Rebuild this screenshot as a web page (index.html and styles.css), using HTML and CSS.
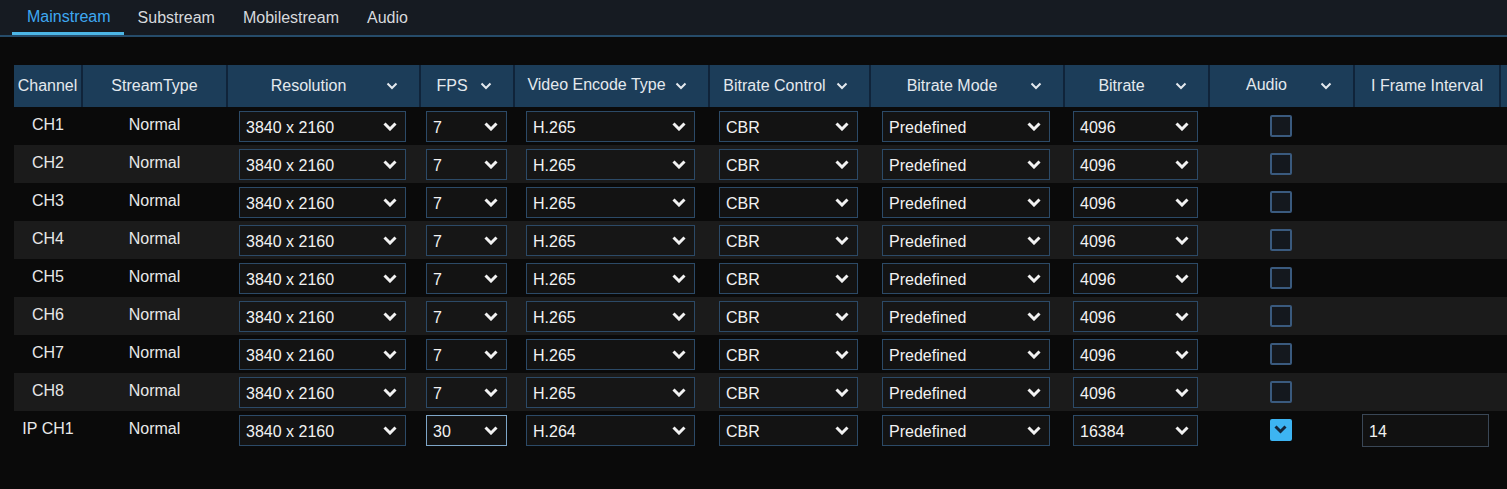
FILE: index.html
```html
<!DOCTYPE html>
<html lang="en">
<head>
    <meta charset="UTF-8">
    <meta name="viewport" content="width=device-width, initial-scale=1.0">
    <title>Encode</title>
    <link rel="stylesheet" href="styles.css">
</head>
<body>
    <div class="tabs">
        <div class="tab active">Mainstream</div>
        <div class="tab">Substream</div>
        <div class="tab">Mobilestream</div>
        <div class="tab">Audio</div>
    </div>

    <div class="content">
        <table class="grid">
            <colgroup>
                <col style="width: 68px">
                <col style="width: 145px">
                <col style="width: 193px">
                <col style="width: 94px">
                <col style="width: 195px">
                <col style="width: 161px">
                <col style="width: 194px">
                <col style="width: 145px">
                <col style="width: 145px">
                <col style="width: 146px">
                <col style="width: 7px">
            </colgroup>
            <thead>
                <tr>
                    <th><div class="th plain">Channel</div></th>
                    <th><div class="th plain">StreamType</div></th>
                    <th><div class="th"><span>Resolution</span><svg class="hchev" viewBox="0 0 12 8"><path d="M1.5 1.5 L6 6 L10.5 1.5"/></svg></div></th>
                    <th><div class="th"><span>FPS</span><svg class="hchev" viewBox="0 0 12 8"><path d="M1.5 1.5 L6 6 L10.5 1.5"/></svg></div></th>
                    <th><div class="th up"><span>Video Encode Type</span><svg class="hchev" viewBox="0 0 12 8"><path d="M1.5 1.5 L6 6 L10.5 1.5"/></svg></div></th>
                    <th><div class="th"><span>Bitrate Control</span><svg class="hchev" viewBox="0 0 12 8"><path d="M1.5 1.5 L6 6 L10.5 1.5"/></svg></div></th>
                    <th><div class="th"><span>Bitrate Mode</span><svg class="hchev" viewBox="0 0 12 8"><path d="M1.5 1.5 L6 6 L10.5 1.5"/></svg></div></th>
                    <th><div class="th"><span>Bitrate</span><svg class="hchev" viewBox="0 0 12 8"><path d="M1.5 1.5 L6 6 L10.5 1.5"/></svg></div></th>
                    <th><div class="th up"><span>Audio</span><svg class="hchev" viewBox="0 0 12 8"><path d="M1.5 1.5 L6 6 L10.5 1.5"/></svg></div></th>
                    <th><div class="th plain">I Frame Interval</div></th>
                    <th class="edge"></th>
                </tr>
            </thead>
            <tbody id="rows"></tbody>
        </table>
    </div>

    <script src="app.js"></script>
</body>
</html>
```

FILE: styles.css
```css
html, body {
    margin: 0;
    padding: 0;
}
body {
    font-family: "Liberation Sans", Arial, sans-serif;
    font-size: 16px;
    background: #0a0a0a;
    color: #e8e8e8;
    width: 1507px;
    height: 489px;
    overflow: hidden;
}
.tabs {
    display: flex;
    height: 35px;
    padding-left: 12px;
    background: #161b22;
    border-bottom: 2px solid #264c6a;
}
.tab {
    padding: 0 14px;
    line-height: 35px;
    height: 35px;
    color: #d6d9dd;
    box-sizing: border-box;
}
.tab.active {
    padding: 0 13px 0 15px;
    color: #3ea8f2;
    border-bottom: 3px solid #4cb6e6;
    line-height: 34px;
}
.content {
    padding: 28px 0 0 14px;
}
.grid {
    table-layout: fixed;
    border-collapse: collapse;
    width: 1493px;
}
.grid th {
    padding: 0;
    height: 42px;
    background: #1c3d59;
    border-right: 2px solid #10243a;
    font-weight: normal;
    color: #e4e9ee;
}
.grid th.edge {
    border-right: none;
}
.th {
    display: flex;
    align-items: center;
    height: 42px;
    padding-right: 21px;
}
.th span {
    flex: 1;
    text-align: center;
    padding-right: 2px;
}
.th.up span {
    margin-top: -3px;
}
.th.plain {
    justify-content: center;
    padding-right: 0;
}
.hchev {
    width: 12px;
    height: 8px;
    margin-left: -5px;
    fill: none;
    stroke: #e4e9ee;
    stroke-width: 2;
}
.grid td {
    padding: 0;
    height: 38px;
    text-align: center;
    vertical-align: middle;
}
.grid tbody tr:nth-child(even) {
    background: #1b1b1b;
}
.label {
    display: block;
    margin-top: -2px;
}
.select, .input {
    display: flex;
    align-items: center;
    height: 31px;
    box-sizing: border-box;
    border: 1px solid #2c4a67;
    background: #131313;
    color: #f2f2f2;
    padding: 3px 8px 0 6px;
    text-align: left;
    margin-top: 1px;
}
.grid tbody tr:nth-child(even) .select {
    background: #161616;
}
.select span {
    flex: 1;
}
.select.focus {
    border-color: #7ea6c8;
}
.chev {
    width: 14px;
    height: 9px;
    fill: none;
    stroke: #f2f2f2;
    stroke-width: 3;
    margin-top: -3px;
}
.w-res { width: 167px; margin-left: 12px; }
.w-fps { width: 81px; margin-left: 6px; }
.w-vet { width: 169px; margin-left: 12px; }
.w-bc { width: 139px; margin-left: 10px; }
.w-bm { width: 168px; margin-left: 12px; }
.w-br { width: 125px; margin-left: 9px; }
.input {
    width: 127px;
    height: 33px;
    margin-left: 8px;
    border-color: #3a4756;
    background: #111111;
}
.check {
    display: inline-block;
    width: 22px;
    height: 22px;
    box-sizing: border-box;
    border: 2px solid #3a5a7e;
    background: #14181e;
    border-radius: 2px;
    vertical-align: middle;
    margin-top: -1px;
    margin-left: -2px;
}
.check.on {
    background: #3db4f2;
    border-color: #3db4f2;
    display: inline-flex;
    align-items: center;
    justify-content: center;
}
.check.on svg {
    width: 13px;
    height: 9px;
    fill: none;
    stroke: #14263c;
    stroke-width: 3;
}
```

FILE: app.js
```js
// filas de canales
var rows = [];
for (var i = 1; i <= 8; i++) {
    rows.push({ ch: 'CH' + i, fps: '7', enc: 'H.265', br: '4096', audio: false });
}
rows.push({ ch: 'IP CH1', fps: '30', enc: 'H.264', br: '16384', audio: true, ifi: '14', focus: true });

var chev = '<svg class="chev" viewBox="0 0 14 9"><path d="M1.5 1.5 L7 7 L12.5 1.5"/></svg>';

function sel(cls, value) {
    return '<div class="select ' + cls + '"><span>' + value + '</span>' + chev + '</div>';
}

var html = '';
rows.forEach(function (r) {
    html += '<tr>' +
        '<td><span class="label">' + r.ch + '</span></td>' +
        '<td><span class="label">Normal</span></td>' +
        '<td>' + sel('w-res', '3840 x 2160') + '</td>' +
        '<td>' + sel('w-fps' + (r.focus ? ' focus' : ''), r.fps) + '</td>' +
        '<td>' + sel('w-vet', r.enc) + '</td>' +
        '<td>' + sel('w-bc', 'CBR') + '</td>' +
        '<td>' + sel('w-bm', 'Predefined') + '</td>' +
        '<td>' + sel('w-br', r.br) + '</td>' +
        '<td>' + (r.audio
            ? '<span class="check on"><svg viewBox="0 0 13 9"><path d="M1.5 1.5 L6.5 6.5 L11.5 1.5"/></svg></span>'
            : '<span class="check"></span>') + '</td>' +
        '<td>' + (r.ifi ? '<div class="input">' + r.ifi + '</div>' : '') + '</td>' +
        '<td></td>' +
        '</tr>';
});
document.getElementById('rows').innerHTML = html;
```
